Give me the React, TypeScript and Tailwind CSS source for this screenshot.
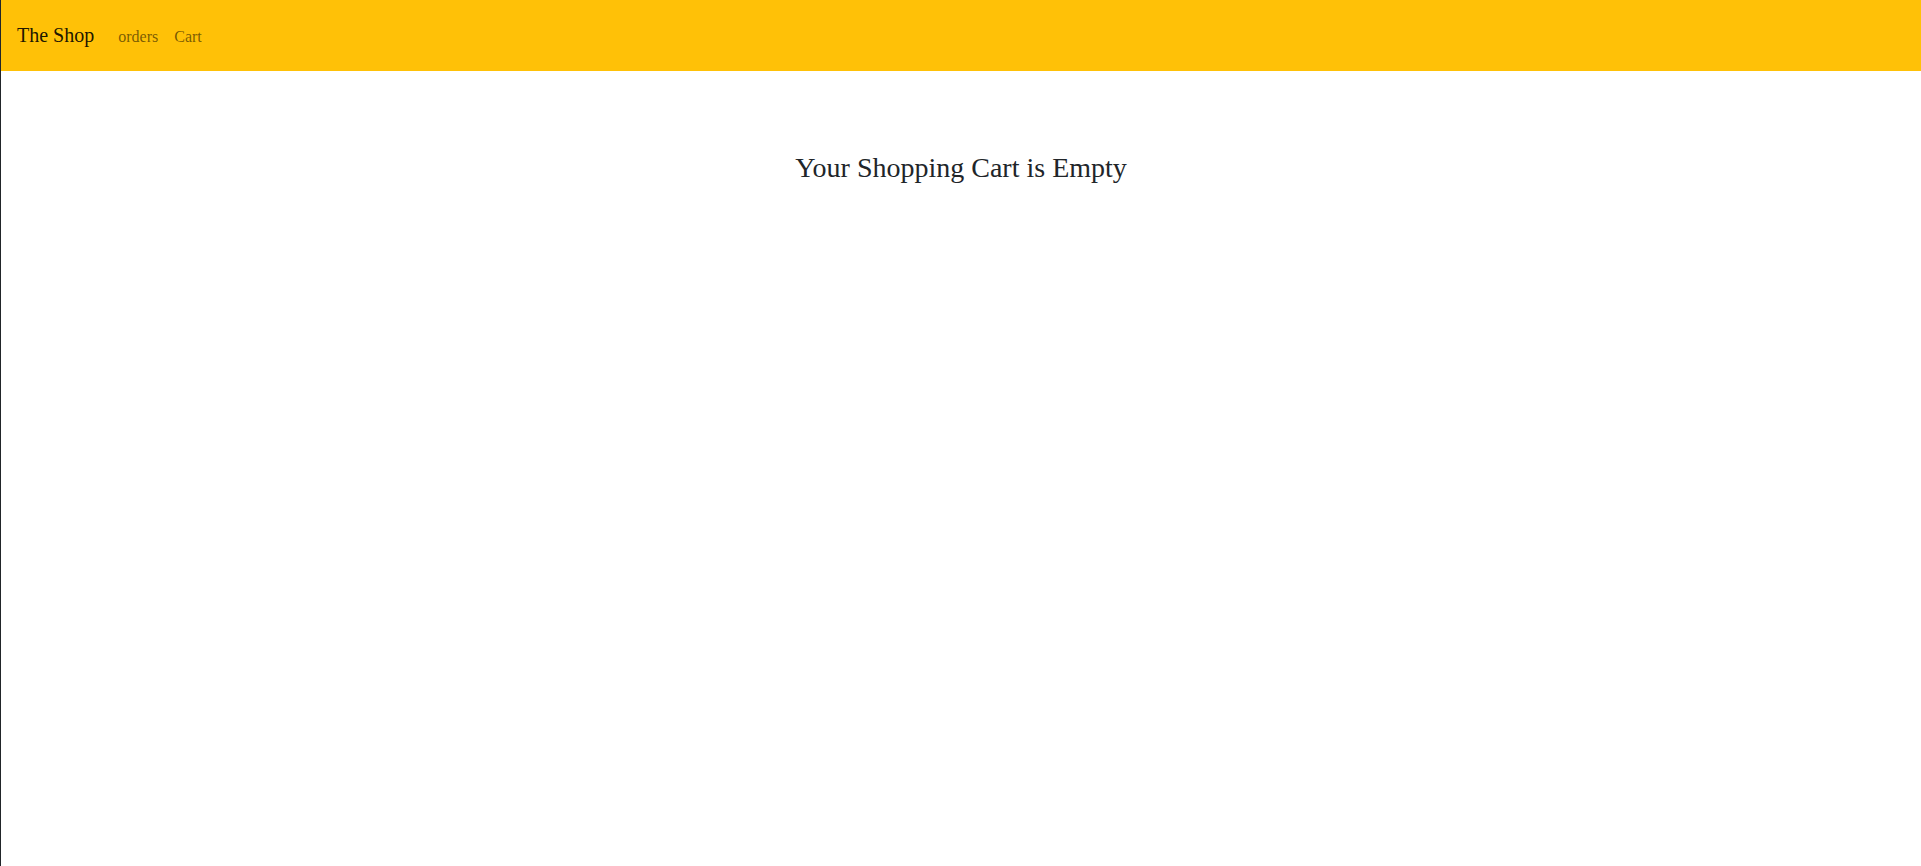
export default function App() {
  return (
    <div
      className="min-h-screen border-l border-[#212529] bg-white text-[#212529]"
      style={{ fontFamily: '"Liberation Serif", "Times New Roman", serif' }}
    >
      <nav className="flex h-[71px] items-center bg-[#ffc107] px-4 pb-[2px]">
        <div className="flex items-baseline">
          <a href="#" className="mr-4 text-[20px] leading-[30px] text-black/90">
            The Shop
          </a>
          <ul className="flex items-baseline">
            <li>
              <a href="#" className="px-2 text-[16px] leading-6 text-black/55">
                orders
              </a>
            </li>
            <li>
              <a href="#" className="px-2 text-[16px] leading-6 text-black/55">
                Cart
              </a>
            </li>
          </ul>
        </div>
      </nav>

      <div className="mt-[80px] text-center">
        <h3 className="text-[28px] leading-[1.2] font-normal">
          Your Shopping Cart is Empty
        </h3>
      </div>
    </div>
  );
}
